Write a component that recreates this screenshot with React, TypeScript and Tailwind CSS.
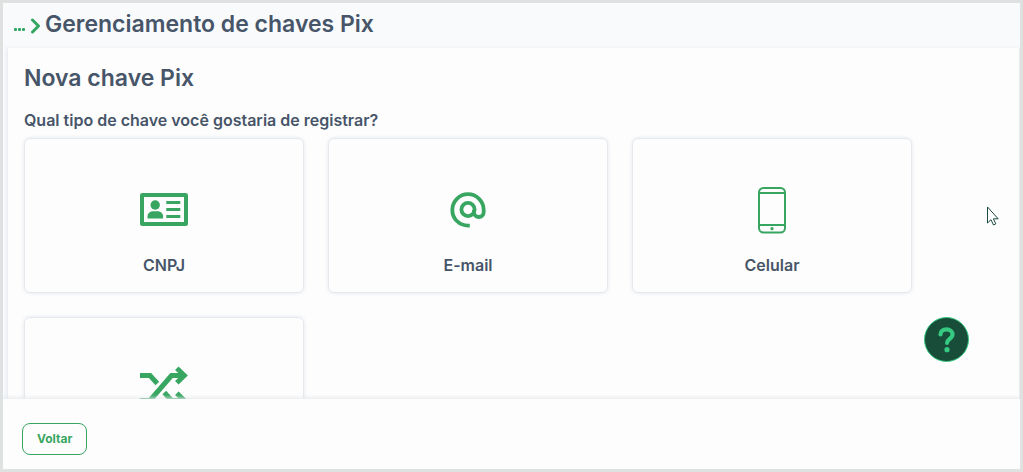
import type { ReactNode } from "react";

function IdCardIcon() {
  return (
    <svg width="48" height="48" viewBox="0 0 48 48" fill="none" aria-hidden="true">
      <rect x="2" y="9" width="44" height="29" rx="0.5" stroke="currentColor" strokeWidth="4" />
      <circle cx="15.2" cy="19" r="4.7" fill="currentColor" />
      <path d="M7.500 32.500v-2c0-3.200 2.600-5.300 5.400-5.300h4.800c2.800 0 5.400 2.100 5.400 5.300v2z" fill="currentColor" />
      <path d="M26.300 16.500h14M26.300 23.500h14M26.300 30.500h14" stroke="currentColor" strokeWidth="3" />
    </svg>
  );
}

function AtIcon() {
  return (
    <svg width="48" height="48" viewBox="0 0 48 48" fill="none" stroke="currentColor" strokeWidth="3.800" aria-hidden="true">
      <path d="M25.800 39.600H24A15.700 15.700 0 1 1 39.700 23.900v2.200a4.900 4.900 0 0 1-9.800 0v-2.200" />
      <circle cx="24" cy="23.500" r="6.600" />
    </svg>
  );
}

function PhoneIcon() {
  return (
    <svg width="48" height="48" viewBox="0 0 48 48" fill="none" stroke="currentColor" strokeWidth="2" aria-hidden="true">
      <rect x="11" y="2" width="26" height="44.500" rx="4.500" />
      <path d="M11 7h26M11 39h26" />
      <circle cx="24" cy="42.700" r="1.600" fill="currentColor" stroke="none" />
    </svg>
  );
}

function ShuffleIcon() {
  return (
    <svg width="48" height="48" viewBox="0 0 48 48" fill="none" stroke="currentColor" strokeWidth="5" aria-hidden="true">
      <path d="M0 10.500h10l7.300 8" />
      <path d="M0 35.500h10l21.500-25H44" />
      <path d="M36.800 3.200l7.500 7.300-7.500 7.300" />
      <path d="M24.300 27.500l7.200 8H44" />
      <path d="M36.800 28.200l7.500 7.300-7.500 7.300" />
    </svg>
  );
}

const keyTypes: { id: string; label?: string; icon: ReactNode }[] = [
  { id: "cnpj", label: "CNPJ", icon: <IdCardIcon /> },
  { id: "email", label: "E-mail", icon: <AtIcon /> },
  { id: "celular", label: "Celular", icon: <PhoneIcon /> },
  { id: "aleatoria", icon: <ShuffleIcon /> },
];

export default function App() {
  return (
    <div className="relative flex h-screen flex-col border-3 border-[#dfe1e0] bg-[#f8fafc] font-['Inter','Liberation_Sans',sans-serif] text-[#475569]">
      <header className="flex h-[45px] shrink-0 items-center gap-1 px-2.5 pb-1">
        <a href="#inicio" className="flex items-center gap-1 text-[#33a661]" aria-label="Início">
          <svg width="14" height="16" viewBox="0 0 14 16" fill="currentColor" className="mt-1" aria-hidden="true">
            <rect x="1" y="10" width="3" height="3" rx="1" />
            <rect x="5" y="10" width="3" height="3" rx="1" />
            <rect x="9" y="10" width="3" height="3" rx="1" />
          </svg>
          <svg width="10" height="16" viewBox="0 0 10 16" fill="none" stroke="currentColor" strokeWidth="3" className="mt-1" aria-hidden="true">
            <path d="M1.500 2l6 6-6 6" strokeLinecap="round" strokeLinejoin="round" />
          </svg>
        </a>
        <h1 className="text-[23px] leading-8 font-semibold">Gerenciamento de chaves Pix</h1>
      </header>

      <main className="ml-[5px] min-h-0 flex-1 overflow-hidden border-r border-[#e8eaeb] bg-[#fdfdfd] px-4 pt-3 shadow-[-2px_0_3px_#e9edf2]">
        <h2 className="text-[23px] leading-9 font-semibold">Nova chave Pix</h2>
        <p className="mt-3 text-base leading-6 font-semibold">Qual tipo de chave você gostaria de registrar?</p>
        <div className="mt-1.5 grid grid-cols-[repeat(auto-fill,280px)] gap-6">
          {keyTypes.map((type) => (
            <button
              key={type.id}
              type="button"
              aria-label={type.label ?? "Aleatória"}
              className="flex h-[155px] flex-col items-center rounded-md border border-[#e5e9ee] pt-[47px] shadow-[0_0_4px_#e2e7ed]"
            >
              <span className="text-[#38a661]">{type.icon}</span>
              {type.label && <span className="mt-[19px] text-base leading-6 font-semibold">{type.label}</span>}
            </button>
          ))}
        </div>
      </main>

      <footer className="z-10 flex h-[70px] shrink-0 items-start bg-[#fdfdfd] px-[19px] pt-6 shadow-[0_-1px_4px_#e2e6ea]">
        <button type="button" className="h-8 rounded-lg border border-[#38a661] px-3.5 text-xs font-bold text-[#38a661]">
          Voltar
        </button>
      </footer>

      <button
        type="button"
        aria-label="Ajuda"
        className="absolute right-[51px] bottom-[107px] z-20 flex size-[45px] items-center justify-center rounded-full border border-[#35c981] bg-[#184d3a] text-[#35c981]"
      >
        <svg width="20" height="28" viewBox="0 0 20 28" fill="none" aria-hidden="true">
          <path d="M3.500 8.500C3.500 5.300 6.200 3.400 9.500 3.400c3.500 0 6 1.900 6 5.100 0 4.300-5.500 4.400-5.500 8.500" stroke="currentColor" strokeWidth="4.200" strokeLinecap="round" />
          <circle cx="10" cy="23.700" r="2.600" fill="currentColor" />
        </svg>
      </button>

      <svg width="14" height="21" viewBox="0 0 14 21" className="pointer-events-none absolute top-[203px] right-[20px] z-20" aria-hidden="true">
        <path d="M1.500 1v16l3.500-3.300 2.500 5.300 2.300-1.100-2.400-5.100h4.800z" fill="#fff" stroke="#1d4a40" />
      </svg>
    </div>
  );
}
